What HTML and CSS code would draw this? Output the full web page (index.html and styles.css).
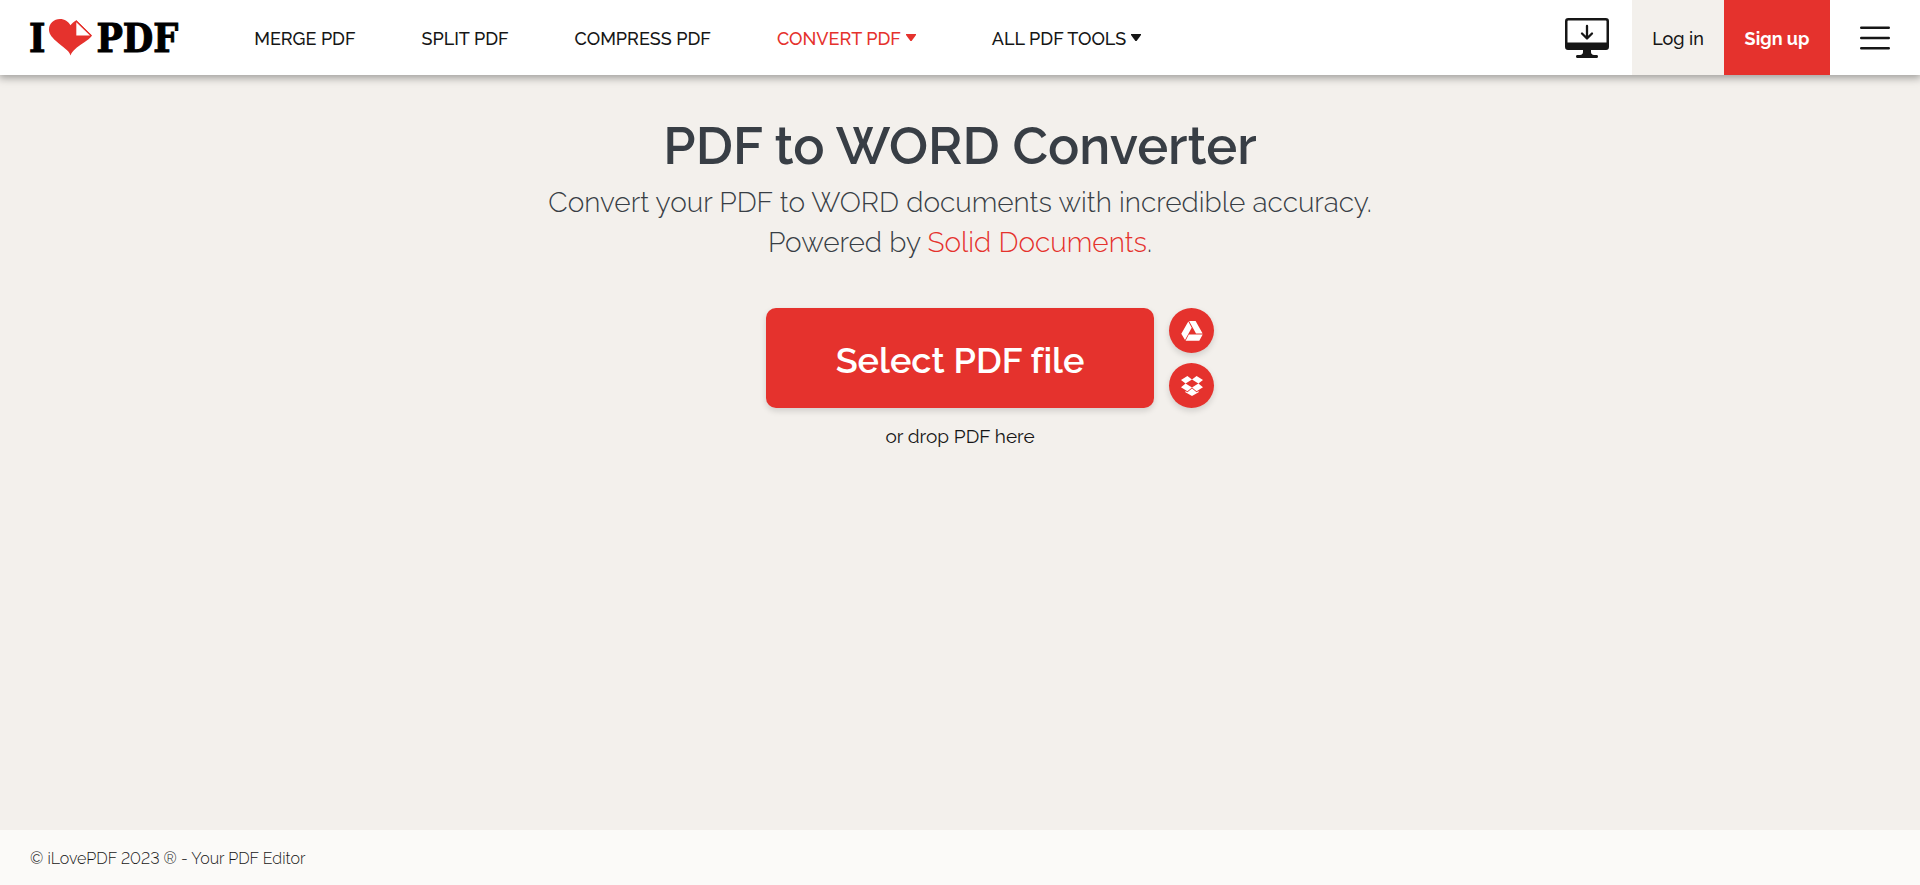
FILE: index.html
```html
<!DOCTYPE html>
<html lang="en">
<head>
<meta charset="utf-8">
<title>PDF to WORD Converter</title>
<link rel="stylesheet" href="styles.css">
</head>
<body>
<header class="header">
  <a class="logo" href="#" aria-label="I love PDF">
    <span>I</span>
    <svg class="logo-heart" viewBox="0 0 43 37" aria-hidden="true">
      <path fill="#e5322d" d="M21.500 36.500C20 31 14 28.500 7 22C2 17.500 0 14.500 0 10.500C0 4.500 5 0 11 0C15.500 0 19.500 2.500 21.500 6.300C22.800 4.500 24.500 2.800 27.300 1.200L43 16.500C41 19.500 38.500 21 35 23.500C27.500 28.500 23 32 21.500 36.500Z"/>
      <path fill="#fff" d="M27.300 3.200V16.500H41Z"/>
      <path fill="none" stroke="#e5322d" d="M27.300 1.700L42.300 16.500"/>
    </svg>
    <span>PDF</span>
  </a>
  <nav class="nav">
    <a href="#">MERGE PDF</a>
    <a href="#">SPLIT PDF</a>
    <a href="#">COMPRESS PDF</a>
    <a class="dropdown active" href="#">CONVERT PDF <svg class="caret" viewBox="0 0 10 8" aria-hidden="true"><path fill="currentColor" d="M0 0H10V1L5.600 7H4.400L0 1Z"/></svg></a>
    <a class="dropdown" href="#">ALL PDF TOOLS <svg class="caret" viewBox="0 0 10 8" aria-hidden="true"><path fill="currentColor" d="M0 0H10V1L5.600 7H4.400L0 1Z"/></svg></a>
  </nav>
  <div class="actions">
    <a class="desktop" href="#" aria-label="Desktop app">
      <svg viewBox="0 0 44 40" aria-hidden="true">
        <rect x="1.250" y="1.250" width="41.500" height="29.500" rx="2" fill="#fff" stroke="#161616" stroke-width="2.500"/>
        <path fill="#161616" d="M1 24.500H43V29Q43 31.500 41 31.500H3Q1 31.500 1 29ZM18 32H26V34Q26 36.500 29 37H32Q33 37.300 33 38.500T32 40H12Q11 39.700 11 38.500T12 37H15Q18 36.500 18 34Z"/>
        <path fill="none" stroke="#161616" stroke-width="2.300" stroke-linecap="round" stroke-linejoin="round" d="M22 8V20M17 15.500L22 20.500L27 15.500"/>
      </svg>
    </a>
    <a class="login" href="#">Log in</a>
    <a class="signup" href="#">Sign up</a>
    <button class="menu" type="button" aria-label="Menu">
      <svg viewBox="0 0 30 24" aria-hidden="true"><path fill="none" stroke="#161616" stroke-width="2.400" stroke-linecap="round" d="M1.200 1.800H28.800M1.200 12H28.800M1.200 22.200H28.800"/></svg>
    </button>
  </div>
</header>
<main class="main">
  <h1 class="title">PDF to WORD Converter</h1>
  <p class="subtitle">Convert your PDF to WORD documents with incredible accuracy.<br>Powered by <a href="#">Solid Documents</a>.</p>
  <div class="uploader">
    <button class="select" type="button">Select PDF file</button>
    <div class="sources">
      <button class="source" type="button" aria-label="Google Drive">
        <svg viewBox="0 0 22 20" aria-hidden="true"><path fill="#fff" d="M7.300 0.500L10.700 6.700L4 19L0.300 12.800ZM8.100 0H14.600L21.600 12.600H15ZM7.800 13.500H21.700L18.300 19.700H4.600Z"/></svg>
      </button>
      <button class="source" type="button" aria-label="Dropbox">
        <svg viewBox="0 0 22 20" aria-hidden="true"><path fill="#fff" d="M6.400 0L11 3.600L4.600 7.600L0 4ZM15.600 0L22 4L17.400 7.600L11 3.600ZM0 11.200L4.600 7.600L11 11.500L6.400 15.200ZM22 11.200L17.400 7.600L11 11.500L15.600 15.200ZM11 12.500L15.600 16.300L17.600 15V16.200L11 20L4.400 16.200V15L6.400 16.300Z"/></svg>
      </button>
    </div>
  </div>
  <p class="drop">or drop PDF here</p>
</main>
<footer class="footer">© iLovePDF 2023 ® - Your PDF Editor</footer>
</body>
</html>
```
FILE: styles.css
```css
* { box-sizing: border-box; }

body {
  margin: 0;
  min-height: 100vh;
  display: flex;
  flex-direction: column;
  background: #f3f0ec;
  color: #161616;
  font-family: Raleway, Lato, sans-serif;
  font-size: 18px;
  font-variant-numeric: lining-nums;
  font-variant-ligatures: none;
}

a { color: inherit; text-decoration: none; }
button { border: 0; padding: 0; background: none; color: inherit; font: inherit; cursor: pointer; }
svg { display: block; }

.header {
  height: 75px;
  display: flex;
  align-items: center;
  background: #fff;
  box-shadow: 0 2px 8px 1px rgba(0, 0, 0, .35);
}

.logo {
  display: flex;
  align-items: center;
  gap: 4px;
  margin-left: 29px;
  color: #000;
  font: bold 39px/40px "DejaVu Serif Condensed", "DejaVu Serif", serif;
  -webkit-text-stroke: 1px #000;
}
.logo-heart { width: 43px; height: 37px; }

.nav {
  display: flex;
  gap: 66px;
  margin-left: 76px;
  padding-top: 2px;
  font-weight: 500;
  line-height: 24px;
  white-space: nowrap;
}
.nav a { display: flex; align-items: center; }
.nav .dropdown { gap: 5px; padding-right: 10px; }
.nav .active { color: #e5322d; }
.caret { width: 10px; height: 8px; margin-bottom: 2px; }

.actions {
  display: flex;
  align-items: center;
  align-self: stretch;
  margin-left: auto;
  font-weight: 500;
}
.desktop { margin-right: 23px; }
.desktop svg { width: 44px; height: 40px; }
.login, .signup {
  display: flex;
  align-items: center;
  justify-content: center;
  align-self: stretch;
  padding-top: 2px;
}
.login { width: 92px; background: #f3f0ec; }
.signup { width: 106px; background: #e5322d; color: #fff; font-weight: 700; }
.menu { padding: 0 30px; }
.menu svg { width: 30px; height: 24px; }

.main {
  flex: 1;
  padding: 40px 24px;
  text-align: center;
}
.title {
  margin: 0;
  color: #383e45;
  font-size: 52px;
  font-weight: 600;
  line-height: 62px;
}
.subtitle {
  margin: 6px 0 45px;
  color: #383e45;
  font-size: 28px;
  font-weight: 300;
  line-height: 40px;
}
.subtitle a { color: #e5322d; }

.uploader {
  display: grid;
  grid-template-columns: 1fr auto 1fr;
  gap: 15px;
}
.select {
  grid-column: 2;
  width: 388px;
  height: 100px;
  padding-top: 4px;
  border-radius: 10px;
  background: #e5322d;
  box-shadow: 0 3px 6px rgba(0, 0, 0, .14);
  color: #fff;
  font-size: 36px;
  font-weight: 600;
}
.sources { display: flex; flex-direction: column; gap: 10px; }
.source {
  width: 45px;
  height: 45px;
  display: grid;
  place-items: center;
  border-radius: 50%;
  background: #e5322d;
  box-shadow: 0 3px 6px rgba(0, 0, 0, .14);
}
.source svg { width: 22px; height: 20px; }
.drop { margin: 16px 0 0; font-size: 19px; line-height: 24px; }

.footer {
  padding: 17px 30px 14px;
  background: #fbfaf8;
  font-size: 16px;
  font-weight: 300;
  line-height: 24px;
}
```
